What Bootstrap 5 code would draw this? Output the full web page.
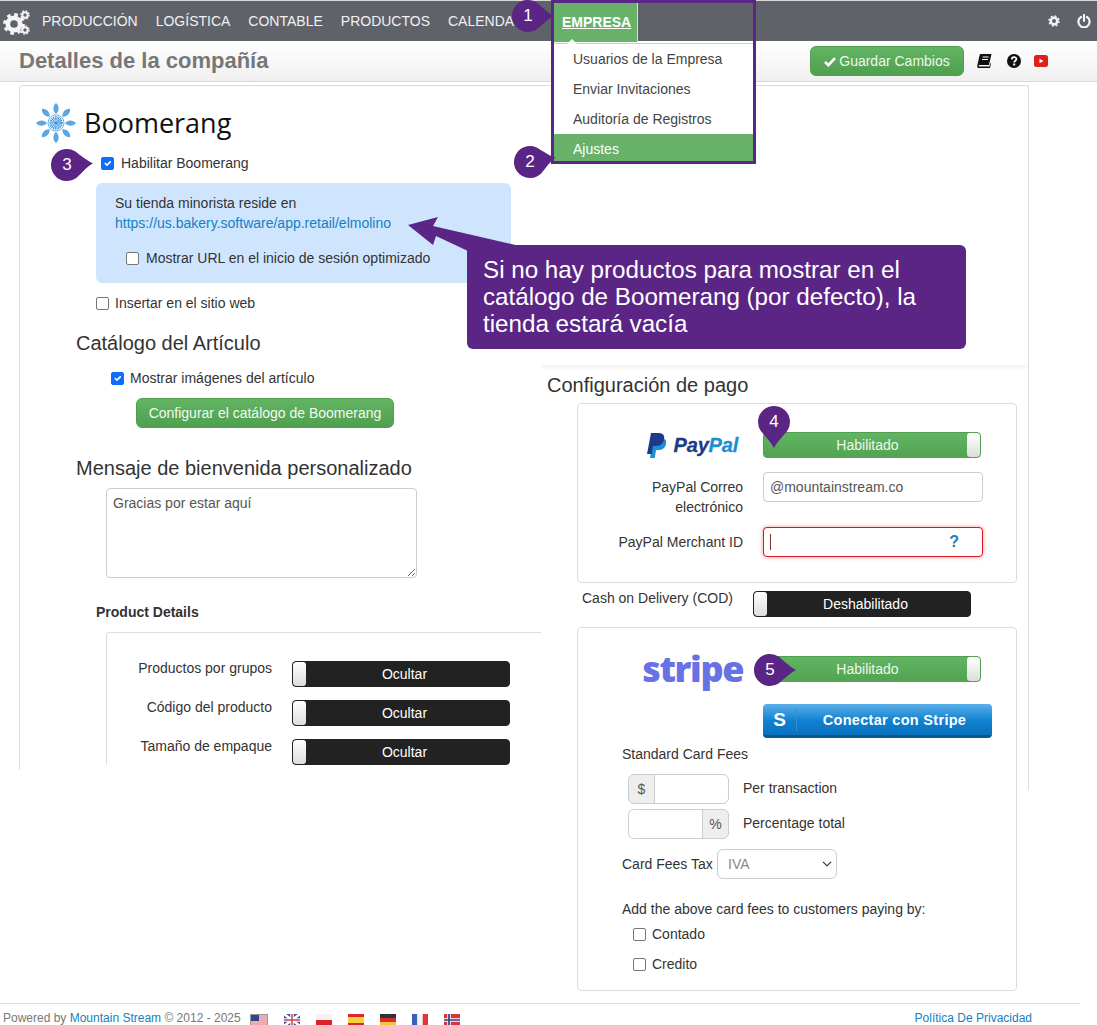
<!DOCTYPE html>
<html lang="es">
<head>
    <meta charset="UTF-8">
    <meta name="viewport" content="width=device-width, initial-scale=1.0">
    <title>Detalles de la compañía</title>
    <link href="https://cdn.jsdelivr.net/npm/bootstrap@5.3.0/dist/css/bootstrap.min.css" rel="stylesheet">
    <style>
        html, body { height: 1025px; overflow: hidden; }
        body { font-family: "Liberation Sans", Arial, sans-serif; font-size: 14px; line-height: 20px; color: #333; background: #fff; position: relative; }

        /* top bar */
        .barra { height: 41px; padding: 0; background: #5f6269; border-top: 1px solid #d8d8d8; flex-wrap: nowrap; justify-content: flex-start; }
        .barra .navbar-nav { margin-left: 33px; }
        .barra .navbar-nav .nav-link { color: #f1f1f1; padding: 0 9px; line-height: 40px; font-size: 14px; text-transform: uppercase; }
        .engranes { position: absolute; left: 3px; top: 8px; }
        .li-cal { width: 114px; }
        .barra .navbar-nav .tab-empresa > .nav-link { margin: 2px 0 0 0; width: 85px; height: 39px; line-height: 38px; padding: 0 0 0 8px; font-size: 14px; font-weight: 700; color: #fff; text-decoration: underline; background: #68b168; border-left: 1px solid #cfe6cf; border-right: 1px solid #cfe6cf; }
        .barra .dropdown-menu { position: absolute; left: 0; top: 42px; margin: 0; width: 200px; padding: 0; border: 0; border-top: 1px solid #ccc; border-radius: 0; z-index: 20; }
        .barra .dropdown-item { height: 30px; line-height: 30px; padding: 0 20px; color: #444; font-size: 14px; }
        .barra .dropdown-item.active { background: #68b168; color: #fff; }
        .pico { position: absolute; left: 14px; top: -5px; width: 0; height: 0; border: 5px solid transparent; border-top: 0; border-bottom-color: #fff; }
        .iconos-barra { margin-left: auto; gap: 16px; padding-right: 6px; }

        /* page header */
        .encabezado { height: 41px; padding: 0 49px 0 19px; background: linear-gradient(#fff, #f0f0f0); border-bottom: 1px solid #d9d9d9; }
        .encabezado h1 { margin: 0; font-size: 22px; line-height: 38px; font-weight: 700; color: #777; }
        .btn-guardar { width: 154px; height: 30px; padding: 0; font-size: 14px; line-height: 28px; color: #eef7ee; background: linear-gradient(#62b562, #4f9f4f); border: 1px solid #4f9f4f; margin-right: 13px; }
        .btn-guardar svg { margin-right: 3px; vertical-align: -1px; }
        .iconos-ayuda { gap: 13px; }
        .ico-libro { margin-right: 2px; }

        /* main panel */
        .cuerpo { margin: 3px 0 0 19px; width: 1010px; }
        .izq { width: 522px; height: 685px; overflow: hidden; border-left: 1px solid #ddd; border-top: 1px solid #ddd; border-top-left-radius: 4px; }
        .der { width: 488px; background: linear-gradient(#ddd, #ddd) right top / 1px 705px no-repeat; }
        .der-top { height: 280px; border-top: 1px solid #ddd; border-top-right-radius: 4px; }
        .pago { padding-top: 8px; background: linear-gradient(#f1f1f1, #fff 5px) no-repeat; background-size: calc(100% - 1px) 5px; }
        .tit-pago { margin: 0 0 6px 6px; font-size: 20px; line-height: 24px; font-weight: 400; color: #333; }
        .marca { margin: 17px 0 0 16px; height: 40px; gap: 8px; }
        .marca span { font-family: "Open Sans", sans-serif; font-size: 27px; line-height: 40px; color: #111; }
        .fila-check { height: 20px; gap: 7px; }
        .fila-check .form-check-input { width: 13px; height: 13px; margin: 0; border-color: #767676; border-radius: 2px; flex: none; }
        .fila-check .form-check-input:checked { background-color: #0d6efd; border-color: #0d6efd; }
        .fila-check.justo { gap: 6px; }
        .c-hab { margin: 10px 0 0 81px; }
        .caja-azul { margin: 10px 0 0 76px; width: 415px; height: 100px; padding: 10px 19px; background: #cfe5fd; border-radius: 6px; }
        .caja-azul a { color: #1480c4; text-decoration: none; }
        .c-url { margin: 15px 0 0 11px; }
        .c-ins { margin: 10px 0 0 76px; }
        .tit-sec { font-size: 20px; line-height: 24px; font-weight: 400; color: #333; margin: 0 0 0 56px; }
        .t1 { margin-top: 18px; }
        .t2 { margin-top: 28px; }
        .c-img { margin: 13px 0 0 91px; }
        .btn-catalogo { display: block; margin: 10px 0 0 116px; width: 258px; height: 30px; padding: 0; font-size: 14px; line-height: 28px; color: #f3f9f3; background: linear-gradient(#62b562, #4f9f4f); border: 1px solid #4f9f4f; }
        .txt-bienv { margin: 8px 0 0 86px; width: 311px; height: 90px; padding: 4px 6px; font-size: 14px; line-height: 20px; color: #555; border-color: #ccc; border-radius: 4px; }
        .tit-det { margin: 24px 0 0 76px; font-size: 14px; font-weight: 700; line-height: 20px; color: #333; }
        .caja-det { margin: 10px 0 0 86px; padding: 28px 0 0 0; border-left: 1px solid #ddd; border-top: 1px solid #ddd; border-top-left-radius: 4px; }
        .fila-det { gap: 20px; margin-bottom: 13px; }
        .fila-det label { width: 165px; margin-top: -3px; text-align: right; }

        /* toggles */
        .conmuta { width: 218px; height: 26px; line-height: 24px; border-radius: 4px; border: 1px solid #222; color: #fff; overflow: hidden; flex: none; }
        .conmuta b { font-weight: 400; flex-grow: 1; text-align: center; }
        .conmuta i { display: block; width: 13px; background: linear-gradient(#fff, #ddd); }
        .off { background: #222; }
        .off i { border-radius: 3px; }
        .off b { padding-right: 6px; }
        .on { background: linear-gradient(#62b562, #52a352); border-color: #4f9f4f; }
        .on i { border-radius: 3px; }
        .on b { padding-left: 4px; color: #eef7ee; }

        /* payment */
        .caja-pago { margin-left: 36px; width: 440px; border: 1px solid #ddd; border-radius: 4px; padding-top: 28px; }
        .cp1 { height: 180px; }
        .cp2 { height: 364px; margin-top: 10px; margin-bottom: 12px; }
        .fila-pago { gap: 20px; }
        .et-pago { width: 165px; flex: none; text-align: right; margin-top: 5px; }
        .fp2 { margin-top: 14px; }
        .fp3 { margin-top: 10px; }
        .campo { width: 220px; height: 30px; padding: 4px 6px; font-size: 14px; line-height: 20px; color: #555; border-color: #ccc; border-radius: 4px; }
        .campo-error { display: flex; align-items: center; border-color: #e0161e; box-shadow: 0 0 4px rgba(224, 22, 30, .45); }
        .cursor { display: block; width: 1px; height: 16px; background: #8a2a2a; }
        .ayuda-id { margin-left: auto; margin-right: 17px; font-size: 16px; font-weight: 700; color: #1480c4; }
        .logo-paypal { height: 26px; gap: 7px; justify-content: flex-end; padding-right: 5px; margin-top: 0; }
        .logo-paypal span { font-size: 20px; font-style: italic; font-weight: 700; letter-spacing: -.2px; color: #1d3a8a; -webkit-text-stroke: .3px currentColor; }
        .logo-paypal span em { color: #1b8fd2; font-style: italic; }
        .fila-cod { margin: 8px 0 0 41px; gap: 20px; }
        .fila-cod label { width: 151px; margin-top: -3px; }
        .logo-stripe { height: 26px; margin: 0; text-align: right; font-family: "Open Sans", sans-serif; font-size: 36px; line-height: 26px; font-weight: 800; letter-spacing: -1.4px; color: #6772e5; }
        .btn-stripe { display: flex; align-items: center; margin: 22px 0 0 185px; width: 229px; height: 34px; padding: 0; color: #fff; font-weight: 700; font-size: 14.5px; background: linear-gradient(#5bb0ea, #0f80d0 55%, #0a72bd); border: 0; border-bottom: 3px solid #07588f; border-radius: 4px; }
        .btn-stripe u { text-decoration: none; width: 34px; height: 22px; line-height: 22px; font-size: 19px; font-weight: 900; text-align: center; border-right: 1px solid #2f90d6; }
        .btn-stripe span { flex-grow: 1; text-align: center; letter-spacing: .3px; }
        .tit-tarifa { margin: 6px 0 0 44px; }
        .grupo-tarifa { margin: 10px 0 0 50px; gap: 14px; }
        .gt2 { margin-top: 5px; }
        .grupo-tarifa > span { margin-top: -2px; }
        .grupo-tarifa .input-group { width: 101px; height: 30px; flex: none; }
        .grupo-tarifa .input-group-text { width: 27px; padding: 0; justify-content: center; font-size: 14px; color: #555; background: #eee; border-color: #ccc; }
        .grupo-tarifa .form-control { padding: 0 6px; font-size: 14px; border-color: #ccc; min-height: 0; }
        .fila-tax { margin: 10px 0 0 44px; }
        .fila-tax label { width: 95px; }
        .sel-iva { width: 120px; height: 30px; padding: 0 6px 0 10px; font-size: 14px; color: #888; border-color: #ccc; background-position: right 4px center; background-size: 10px; }
        .tit-agregar { margin: 20px 0 0 44px; }
        .c-con { margin: 5px 0 0 55px; }
        .c-cre { margin: 10px 0 0 55px; }

        /* footer */
        .pie { width: 1080px; height: 22px; padding: 5px 48px 0 3px; border-top: 1px solid #ddd; font-size: 12px; line-height: 18px; color: #777; }
        .pie a { color: #1480c4; text-decoration: none; }
        .banderas { gap: 16px; margin-left: 9px; margin-top: 5px; align-self: flex-start; }
        .privacidad { margin-left: auto; }

        /* annotations */
        .marco { position: absolute; left: 551px; top: 0; width: 205px; height: 164px; border: 3px solid #5b2586; z-index: 30; pointer-events: none; }
        .gota { position: absolute; width: 32px; height: 32px; display: flex; align-items: center; justify-content: center; color: #fff; font-size: 17px; z-index: 40; }
        .gota svg { position: absolute; left: 0; top: 0; overflow: visible; }
        .gota span { position: relative; }
        .g1 { left: 512px; top: 0; }
        .g2 { left: 514px; top: 146px; }
        .g2 svg { transform: rotate(-10deg); }
        .g3 { left: 51px; top: 149px; }
        .g3 svg { transform: rotate(-4deg); }
        .g4 { left: 758px; top: 406px; }
        .g4 svg { transform: rotate(90deg); }
        .g5 { left: 754px; top: 654px; }
        .globo { position: absolute; left: 467px; top: 245px; width: 499px; height: 104px; padding: 11px 16px; background: #5b2586; border-radius: 6px; color: #fff; font-size: 24.2px; line-height: 27px; z-index: 35; }
        .flecha { position: absolute; left: 400px; top: 210px; z-index: 34; }
    </style>
</head>
<body>
    <svg width="0" height="0" class="position-absolute">
        <defs>
            <g id="cog">
                <circle r="6.5" fill="none" stroke="currentColor" stroke-width="5"/>
                <circle r="10" fill="none" stroke="currentColor" stroke-width="3" stroke-dasharray="3.9 3.95"/>
            </g>
            <path id="petalo" d="M0 -9 C3.500 -12 3.500 -17 0 -20 C-3.500 -17 -3.500 -12 0 -9Z"/>
            <path id="gota-forma" d="M9 -13.200 C14 -9 20 -3 26 0 C20 3 14 9 9 13.200 A16 16 0 1 1 9 -13.200Z" fill="#5b2586"/>
        </defs>
    </svg>

    <!-- Barra superior -->
    <nav class="navbar navbar-expand barra">
        <svg class="engranes" width="27" height="26" viewBox="0 0 27 26" color="#f4f4f4">
            <use href="#cog" transform="translate(11 15) scale(.95)"/>
            <use href="#cog" transform="translate(22 6) scale(.42)"/>
            <use href="#cog" transform="translate(22 21) scale(.42)"/>
        </svg>
        <ul class="navbar-nav">
            <li class="nav-item"><a class="nav-link" href="#">Producción</a></li>
            <li class="nav-item"><a class="nav-link" href="#">Logística</a></li>
            <li class="nav-item"><a class="nav-link" href="#">Contable</a></li>
            <li class="nav-item"><a class="nav-link" href="#">Productos</a></li>
            <li class="nav-item li-cal"><a class="nav-link" href="#">Calenda</a></li>
            <li class="nav-item dropdown tab-empresa">
                <a class="nav-link" href="#">Empresa</a>
                <div class="dropdown-menu show">
                    <span class="pico"></span>
                    <a class="dropdown-item" href="#">Usuarios de la Empresa</a>
                    <a class="dropdown-item" href="#">Enviar Invitaciones</a>
                    <a class="dropdown-item" href="#">Auditoría de Registros</a>
                    <a class="dropdown-item active" href="#">Ajustes</a>
                </div>
            </li>
        </ul>
        <div class="d-flex align-items-center iconos-barra">
            <svg width="14" height="14" viewBox="-14 -14 28 28" color="#f4f4f4"><use href="#cog"/></svg>
            <svg width="14" height="14" viewBox="0 0 14 14" fill="none" stroke="#f4f4f4" stroke-width="2.2" stroke-linecap="round"><path d="M4 3a5.6 5.6 0 1 0 6 0"/><path d="M7 1v6"/></svg>
        </div>
    </nav>

    <!-- Encabezado de la página -->
    <header class="d-flex align-items-center encabezado">
        <h1>Detalles de la compañía</h1>
        <div class="d-flex align-items-center ms-auto">
            <button class="btn btn-guardar" type="button"><svg width="12" height="11" viewBox="0 0 12 11"><path d="M1 5.8l3.4 3.4L11 2.2" fill="none" stroke="#fff" stroke-width="2.6"/></svg>Guardar Cambios</button>
            <div class="d-flex align-items-center iconos-ayuda">
                <svg class="ico-libro" width="15" height="14" viewBox="0 0 15 14"><path d="M4 0h10.500l-2.600 11H2.400c-.9 0-.9 1.400 0 1.400h10l.9-3.400.7.7-1.200 4.300H2C.4 14 0 12.800.3 11.400L2.600 1.200C2.800.4 3.200 0 4 0z" fill="#111"/><path d="M5.600 3h6M5 5.500h6" stroke="#fff"/></svg>
                <svg width="14" height="14" viewBox="0 0 14 14"><circle cx="7" cy="7" r="7" fill="#111"/><path d="M4.800 5.400C4.900 2.400 9.400 2.500 9.400 5.100 9.400 6.700 7.200 6.700 7.200 8.400" fill="none" stroke="#fff" stroke-width="1.800"/><rect x="6.200" y="9.500" width="2" height="2" fill="#fff"/></svg>
                <svg width="14" height="12" viewBox="0 0 14 12"><rect width="14" height="12" rx="2.500" fill="#e0201b"/><path d="M5.500 3.700v4.600L9.500 6z" fill="#fff"/></svg>
            </div>
        </div>
    </header>

    <main class="d-flex align-items-start cuerpo">
        <!-- Columna izquierda -->
        <section class="izq">
            <div class="d-flex align-items-center marca">
                <svg width="40" height="40" viewBox="-20 -20 40 40" fill="#5aa7e4">
                    <use href="#petalo"/>
                    <use href="#petalo" transform="rotate(45)"/>
                    <use href="#petalo" transform="rotate(90)"/>
                    <use href="#petalo" transform="rotate(135)"/>
                    <use href="#petalo" transform="rotate(180)"/>
                    <use href="#petalo" transform="rotate(225)"/>
                    <use href="#petalo" transform="rotate(270)"/>
                    <use href="#petalo" transform="rotate(315)"/>
                    <circle r="8" fill="none" stroke="#5aa7e4" stroke-width=".9"/>
                    <circle r="4.500" fill="none" stroke="#3f95dc" stroke-width="4.500" stroke-dasharray=".9 .5"/>
                    <circle r="2"  fill="#3f95dc"/>
                </svg>
                <span>Boomerang</span>
            </div>

            <label class="d-flex align-items-center fila-check c-hab"><input class="form-check-input" type="checkbox" checked>Habilitar Boomerang</label>

            <div class="caja-azul">
                <div>Su tienda minorista reside en</div>
                <a href="#">https://us.bakery.software/app.retail/elmolino</a>
                <label class="d-flex align-items-center fila-check c-url"><input class="form-check-input" type="checkbox">Mostrar URL en el inicio de sesión optimizado</label>
            </div>

            <label class="d-flex align-items-center fila-check justo c-ins"><input class="form-check-input" type="checkbox">Insertar en el sitio web</label>

            <h2 class="tit-sec t1">Catálogo del Artículo</h2>
            <label class="d-flex align-items-center fila-check justo c-img"><input class="form-check-input" type="checkbox" checked>Mostrar imágenes del artículo</label>
            <button class="btn btn-catalogo" type="button">Configurar el catálogo de Boomerang</button>

            <h2 class="tit-sec t2">Mensaje de bienvenida personalizado</h2>
            <textarea class="form-control txt-bienv">Gracias por estar aquí</textarea>

            <div class="tit-det">Product Details</div>
            <div class="caja-det">
                <div class="d-flex fila-det"><label>Productos por grupos</label><div class="d-flex conmuta off"><i></i><b>Ocultar</b></div></div>
                <div class="d-flex fila-det"><label>Código del producto</label><div class="d-flex conmuta off"><i></i><b>Ocultar</b></div></div>
                <div class="d-flex fila-det"><label>Tamaño de empaque</label><div class="d-flex conmuta off"><i></i><b>Ocultar</b></div></div>
            </div>
        </section>

        <!-- Columna derecha -->
        <section class="der">
            <div class="der-top"></div>
            <div class="pago">
                <h2 class="tit-pago">Configuración de pago</h2>

                <div class="caja-pago cp1">
                    <div class="d-flex fila-pago">
                        <div class="d-flex align-items-center et-pago logo-paypal">
                            <svg width="20" height="25" viewBox="0 0 20 25"><path d="M6 5h7c4.500 0 7 2 6 6-1 4-3.500 6-8 6H9l-1.200 8H3z" fill="#1b8fd2"/><path d="M4 0h7c5 0 7 2.500 6 6.500-1 4.500-4 6.500-8.500 6.500H6l-1.300 8H0z" fill="#1d3a8a"/></svg>
                            <span>Pay<em>Pal</em></span>
                        </div>
                        <div class="d-flex conmuta on"><b>Habilitado</b><i></i></div>
                    </div>
                    <div class="d-flex fila-pago fp2">
                        <label class="et-pago">PayPal Correo<br>electrónico</label>
                        <input class="form-control campo" type="text" value="@mountainstream.co">
                    </div>
                    <div class="d-flex fila-pago fp3">
                        <label class="et-pago">PayPal Merchant ID</label>
                        <div class="form-control campo campo-error"><span class="cursor"></span><span class="ayuda-id">?</span></div>
                    </div>
                </div>

                <div class="d-flex fila-cod">
                    <label>Cash on Delivery (COD)</label>
                    <div class="d-flex conmuta off"><i></i><b>Deshabilitado</b></div>
                </div>

                <div class="caja-pago cp2">
                    <div class="d-flex fila-pago">
                        <div class="et-pago logo-stripe">stripe</div>
                        <div class="d-flex conmuta on"><b>Habilitado</b><i></i></div>
                    </div>
                    <button class="btn-stripe" type="button"><u>S</u><span>Conectar con Stripe</span></button>
                    <div class="tit-tarifa">Standard Card Fees</div>
                    <div class="d-flex align-items-center grupo-tarifa">
                        <div class="input-group"><span class="input-group-text">$</span><input class="form-control" type="text"></div>
                        <span>Per transaction</span>
                    </div>
                    <div class="d-flex align-items-center grupo-tarifa gt2">
                        <div class="input-group"><input class="form-control" type="text"><span class="input-group-text">%</span></div>
                        <span>Percentage total</span>
                    </div>
                    <div class="d-flex align-items-center fila-tax">
                        <label>Card Fees Tax</label>
                        <select class="form-select sel-iva"><option>IVA</option></select>
                    </div>
                    <div class="tit-agregar">Add the above card fees to customers paying by:</div>
                    <label class="d-flex align-items-center fila-check justo c-con"><input class="form-check-input" type="checkbox">Contado</label>
                    <label class="d-flex align-items-center fila-check justo c-cre"><input class="form-check-input" type="checkbox">Credito</label>
                </div>
            </div>
        </section>
    </main>

    <!-- Pie de página -->
    <footer class="d-flex pie">
        <span>Powered by <a href="#">Mountain Stream</a> © 2012 - 2025</span>
        <div class="d-flex banderas">
            <svg width="18" height="13" viewBox="0 0 18 13"><rect x=".5" y=".5" width="17" height="12" fill="#fff" stroke="#999"/><path d="M1 2h16M1 4h16M1 6h16M1 8h16M1 10h16M1 12h16" stroke="#d8414a" stroke-width=".9"/><rect x="1" y="1" width="8" height="6" fill="#31468f"/></svg>
            <svg width="16" height="12" viewBox="0 0 16 12"><rect width="16" height="12" fill="#3d5a9e"/><path d="M0 0l16 12M16 0L0 12" stroke="#fff" stroke-width="2.500"/><path d="M8 0v12M0 6h16" stroke="#fff" stroke-width="3.500"/><path d="M8 0v12M0 6h16" stroke="#d8414a" stroke-width="1.500"/></svg>
            <svg width="16" height="12" viewBox="0 0 16 12"><rect width="16" height="6" fill="#f2f2f2"/><rect y="6" width="16" height="6" fill="#e0212b"/></svg>
            <svg width="16" height="12" viewBox="0 0 16 12"><rect width="16" height="12" fill="#d9282f"/><rect y="3" width="16" height="6" fill="#f7d038"/></svg>
            <svg width="16" height="12" viewBox="0 0 16 12"><rect width="16" height="4" fill="#333"/><rect y="4" width="16" height="4" fill="#d9282f"/><rect y="8" width="16" height="4" fill="#f2c63a"/></svg>
            <svg width="16" height="12" viewBox="0 0 16 12"><rect width="5.300" height="12" fill="#3a5fb8"/><rect x="5.300" width="5.400" height="12" fill="#f4f4f4"/><rect x="10.700" width="5.300" height="12" fill="#e0353d"/></svg>
            <svg width="16" height="12" viewBox="0 0 16 12"><rect width="16" height="12" fill="#d9343c"/><path d="M5 0v12M0 6h16" stroke="#fff" stroke-width="3.500"/><path d="M5 0v12M0 6h16" stroke="#2a3f86" stroke-width="1.700"/></svg>
        </div>
        <a class="privacidad" href="#">Política De Privacidad</a>
    </footer>

    <!-- Anotaciones -->
    <div class="marco"></div>
    <div class="gota g1"><svg width="32" height="32" viewBox="-16 -16 32 32"><use href="#gota-forma"/></svg><span>1</span></div>
    <div class="gota g2"><svg width="32" height="32" viewBox="-16 -16 32 32"><use href="#gota-forma"/></svg><span>2</span></div>
    <div class="gota g3"><svg width="32" height="32" viewBox="-16 -16 32 32"><use href="#gota-forma"/></svg><span>3</span></div>
    <div class="gota g4"><svg width="32" height="32" viewBox="-16 -16 32 32"><use href="#gota-forma"/></svg><span>4</span></div>
    <div class="gota g5"><svg width="32" height="32" viewBox="-16 -16 32 32"><use href="#gota-forma"/></svg><span>5</span></div>
    <svg class="flecha" width="125" height="45" viewBox="0 0 125 45"><polygon points="8,15 38,7 33,16 120,36 70,42 36,26 33,35" fill="#5b2586"/></svg>
    <div class="globo">Si no hay productos para mostrar en el catálogo de Boomerang (por defecto), la tienda estará vacía</div>

    <script src="https://cdn.jsdelivr.net/npm/bootstrap@5.3.0/dist/js/bootstrap.bundle.min.js"></script>
</body>
</html>
